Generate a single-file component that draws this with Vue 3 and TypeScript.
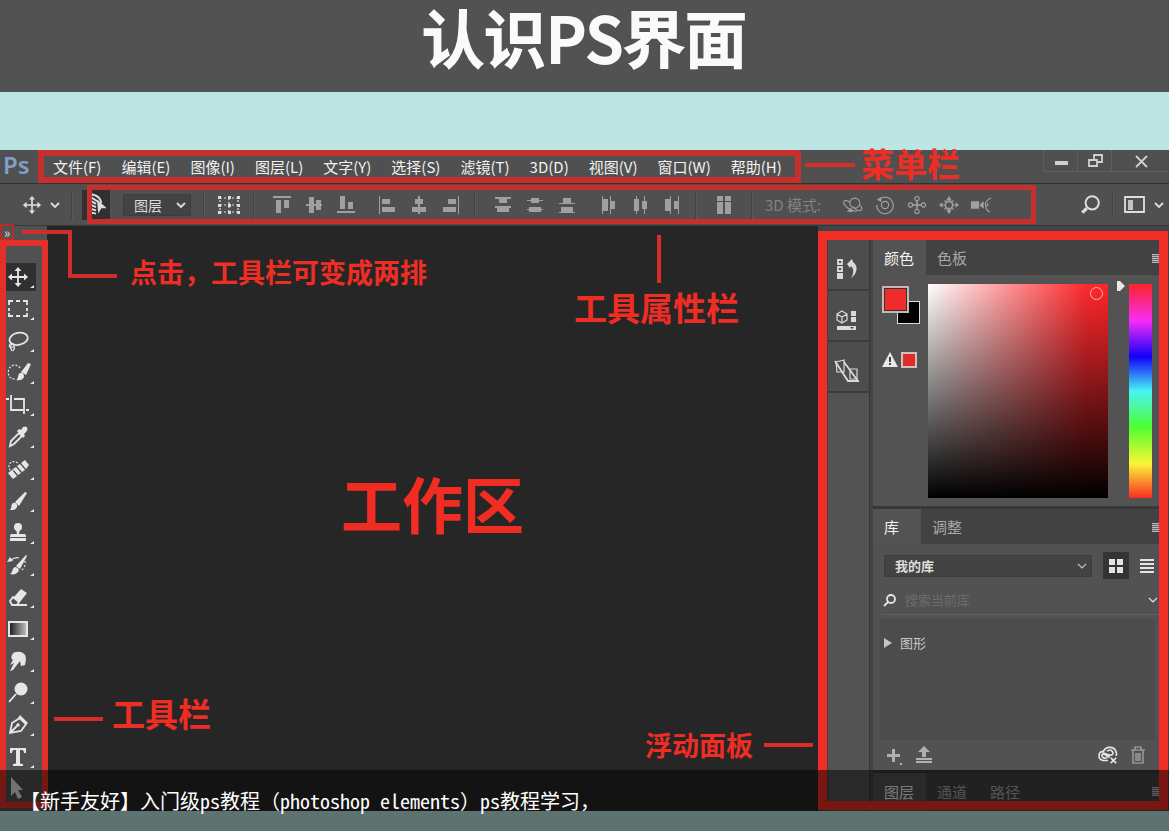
<script setup lang="ts">
import { ref } from 'vue'

interface Glyph { label: string; art: string }

const menus: string[] = ['文件(F)', '编辑(E)', '图像(I)', '图层(L)', '文字(Y)', '选择(S)', '滤镜(T)', '3D(D)', '视图(V)', '窗口(W)', '帮助(H)']

const moveArt = '<path d="M-7 0H7M0-7V7" class="s2"/><path d="M-10 0l4-3.5v7zM10 0l-4-3.5v7zM0-10l-3.5 4h7zM0 10l-3.5-4h7z"/>'

const tools: Glyph[] = [
  { label: '移动', art: moveArt },
  { label: '矩形选框', art: '<path class="s2" d="M-9-4v-4h4M-2-8h4M5-8h4v4M9-1v3M9 4v3H5M2 7h-4M-5 7h-4V4M-9 2v-3"/>' },
  { label: '套索', art: '<ellipse class="s2" cx="1" cy="-2" rx="9.3" ry="6" transform="rotate(-12)"/><path class="s1" d="M-8 3c-2 3 1 4 3 3s1-4-1-3-2 3 0 7M-5 5c3 1 1 3 0 5"/>' },
  { label: '快速选择', art: '<path class="s1" stroke-dasharray="2 1.6" d="M2-5C0-9-7-9-9-4s0 10 6 10"/><path d="M-2 7c3-1 1-5 4-7 2-1 4 1 4 3 0 4-5 5-8 4zM3-1l7-9 3 1-5 11z"/>' },
  { label: '裁剪', art: '<path class="s2" d="M-12-6h3M-7-10V5H5M-4-6H6V9M8 5h3"/>' },
  { label: '吸管', art: '<path class="s2" d="M1-4l3 3-8 8-4 2 1-5z"/><path d="M-1-6l2-2 2 1 2-3c4-2 6 2 3 5l-2 2 1 2-2 2z"/>' },
  { label: '污点修复', art: '<path class="s1" stroke-dasharray="2 1.5" d="M-4 1h-4c-3-5 1-10 6-8l2 1"/><path d="M-10 4l4-3 5 6-4 3zM-5 0l3-2 5 6-3 2zM-1-3l3-2 5 6-3 2zM3-6l4-3 4 5-3 4z"/>' },
  { label: '画笔', art: '<path d="M-9 9c4-1 1-5 4-7 3-1 5 2 4 4-2 4-5 3-8 3zM-3 1L7-9l2 1L1 5z"/>' },
  { label: '仿制图章', art: '<circle cx="0" cy="-6" r="4"/><path d="M-2-4h4L1 1h6q1 0 1 3H-8q0-3 1-3h6zM-8 5H8v3H-8z"/>' },
  { label: '历史画笔', art: '<path d="M-8 9c3-2 2-6 5-7 3 0 5 3 3 5s-4 3-8 2zM-2 1L8-10l1 1L2 4zM-11-3l3-5 3 4z"/><path class="s1" d="M-8-4c3-3 6-4 9-3"/><path class="s1" stroke-dasharray="2 2" d="M7-4c1 5-2 9-5 10"/>' },
  { label: '橡皮擦', art: '<path d="M-5 1L3-8l6 4-7 9z"/><path class="s2" d="M-8 4l3-4 6 5-2 3h-5zM-3 8H9"/>' },
  { label: '渐变', art: '<rect x="-10" y="-8" width="20" height="16"/><rect x="-8" y="-6" width="16" height="12" fill="url(#ramp)"/>' },
  { label: '涂抹', art: '<path d="M-6-6c1-4 8-4 11-2 4 2 3 8 2 12L3 5 2 0l-7 9-3 1 4-8-4 2 3-5c-2-1-2-3-1-5z"/>' },
  { label: '减淡', art: '<circle cx="3" cy="-4" r="6.5"/><path class="s2" d="M-2 1l-7 8"/>' },
  { label: '钢笔', art: '<path class="s2" d="M-8 8l2-10 8-5 6 6-5 7zM-8 8l7-7"/><circle cx="0" cy="0" r="1.8"/><path d="M2-10l8 8-2 2-8-7z"/>' },
  { label: '文字', art: '<path d="M-8-9H8v5H6c0-2-1-3-2-3H2V6q0 1 3 1v2H-5V7q3 0 3-1V-7h-2c-1 0-2 1-2 3h-2z"/>' },
  { label: '路径选择', art: '<path d="M-7-12L5 1H0l4 7-4 2-3-7-4 4z"/>' },
]

const alignA: Glyph[] = [
  { label: '顶对齐', art: '<path d="M-9-9H9v2H-9zM-6-5h5V8h-5zM2-5h5V3H2z"/>' },
  { label: '垂直居中', art: '<path d="M-8-1H8v2H-8zM-5-8h5V8h-5zM2-5h5V5H2z"/>' },
  { label: '底对齐', art: '<path d="M-9 6H9v2H-9zM-6-9h5V4h-5zM2-3h5v7H2z"/>' },
]
const alignB: Glyph[] = [
  { label: '左对齐', art: '<path d="M-8-9h1V9h-1zM-5-6h8v5h-8zM-5 2H8v5H-5z"/>' },
  { label: '水平居中', art: '<path d="M-1-9h2V9h-2zM-4-6h8v5h-8zM-7 2H7v5H-7z"/>' },
  { label: '右对齐', art: '<path d="M7-9h1V9H7zM-3-6h8v5h-8zM-8 2H5v5H-8z"/>' },
]
const distA: Glyph[] = [
  { label: '按顶分布', art: '<path d="M-8-8H8v2H-8zM-4-6h8v4h-8zM-8 1H8v2H-8zM-6 3H6v4H-6z"/>' },
  { label: '按垂直中心分布', art: '<path d="M-8-5H8v1H-8zM-4-7h8v5h-8zM-8 4H8v1H-8zM-6 2H6v5H-6z"/>' },
  { label: '按底分布', art: '<path d="M-8-2H8v1H-8zM-4-7h8v5h-8zM-8 7H8v1H-8zM-6 2H6v5H-6z"/>' },
]
const distB: Glyph[] = [
  { label: '按左分布', art: '<path d="M-6-9h1V9h-1zM-5-6h5V6h-5zM2-9h1V9H2zM3-4h4V4H3z"/>' },
  { label: '按水平中心分布', art: '<path d="M-4-9h1V9h-1zM-6-6h5V6h-5zM4-9h1V9H4zM2-4h5V4H2z"/>' },
  { label: '按右分布', art: '<path d="M-2-9h1V9h-1zM-7-6h5V6h-5zM6-9h1V9H6zM2-4h4V4H2z"/>' },
]
const spread: Glyph = { label: '自动对齐', art: '<path d="M-7-9h6v5h-6zM1-9h6v5H1zM-7-3h6V9h-6zM1-3h6V9H1z"/>' }
const modes: Glyph[] = [
  { label: '旋转', art: '<circle class="s1" cx="2" cy="-2" r="5.5"/><path class="s1" d="M-3-3c-4-3-8-2-7 1 1 4 9 9 14 9M7 0c3 2 4 5 1 6s-6-2-8-4"/><path d="M-7 7l7 1-2-5z"/>' },
  { label: '滚动', art: '<circle class="s1" cx="0" cy="0" r="4"/><path class="s1" d="M-5-7A9 9 0 1 1-9 0"/><path d="M-9-6l5-3v6z"/>' },
  { label: '拖动', art: '<path class="s2" d="M-5 0H5M0-5V5"/><circle class="s1" r="2.3" cx="-7"/><circle class="s1" r="2.3" cx="7"/><circle class="s1" r="2.3" cy="-7"/><circle class="s1" r="2.3" cy="7"/>' },
  { label: '滑动', art: '<circle class="s2" r="4"/><path class="s1" d="M-7 0h3M4 0h3M-5-5l2 2M5-5L3-3M-5 5l2-2M5 5L3 3"/><path d="M-11 0l4-3v6zM11 0L7-3v6zM0 10l-3-5h6zM0-10l-3 5h6z"/>' },
  { label: '缩放', art: '<path d="M-11-4h9v8h-9zM-1-1l4-3v8l-4-3z"/><path class="s1" d="M11-8C5-5 4-1 5 0s4 1 2-2M5 0c0 4 1 6 5 8"/>' },
]
const dock: Glyph[] = [
  { label: '历史记录', art: '<path class="s2" d="M-9-9h4v4h-4zM-9-2h4v4h-4z"/><path d="M-10 4h6v6h-6zM0-5l5-5 1 3c6 4 4 12-2 16 3-5 3-9 0-12l-1 2z"/>' },
  { label: '属性', art: '<path class="s1" d="M-10-6l5-3 5 3v6l-5 3-5-3zM-10-6l5 3 5-3M-5-3v6"/><path d="M4-9h5v5H4zM4-3h5v5H4zM-10 6H9v4h-19z"/><path d="M3 7h4l-2 2z" fill="#444"/>' },
  { label: '画笔设置', art: '<path class="s1" d="M-11-9l8-2v12h-7zM3-2h7v10H3z"/><path class="s2" d="M-12-10L1 10h10L-3-9"/>' },
]

const auto = ref('图层')
const lib = ref('我的库')
const query = ref('')
</script>

<template>
  <main class="page">
    <h1 class="title">认识PS界面</h1>

    <svg class="defs" aria-hidden="true"><defs><linearGradient id="ramp"><stop offset="0" stop-color="#222" /><stop offset="1" stop-color="#bbb" /></linearGradient></defs></svg>

    <section class="window">
      <header class="menubar">
        <span class="logo">Ps</span>
        <nav class="menus"><button v-for="m in menus" :key="m" type="button">{{ m }}</button></nav>
        <div class="wincontrols">
          <button type="button" aria-label="最小化"><svg viewBox="-10 -10 20 20"><path d="M-6 0H7v4H-6z" /></svg></button>
          <button type="button" aria-label="还原"><svg viewBox="-10 -10 20 20"><path class="s2" d="M-6-1H2v6H-6zM-1-1v-5h8v7H2" /></svg></button>
          <button type="button" aria-label="关闭"><svg viewBox="-10 -10 20 20"><path class="s2" d="M-5-5L6 6M6-5L-5 6" /></svg></button>
        </div>
      </header>

      <div class="options">
        <button type="button" aria-label="移动工具" class="lit"><svg viewBox="-11 -11 22 22" v-html="moveArt"></svg></button>
        <button type="button" aria-label="预设" class="lit slim"><svg viewBox="-6 -10 12 20"><path class="s2" d="M-4-2l4 4 4-4" /></svg></button>
        <i class="rule first"></i>
        <button type="button" aria-label="自动选择" class="autosel"><svg viewBox="-13 -13 26 26"><path class="s2" d="M-6-8L2-3M-7-5L0-1M-7-1L0 2M-7 3L0 5M-5-10C3-9 4-5 5-2M-5 7L0 8" /><path d="M1-5l9 8-5 0-3 5z" /></svg></button>
        <div class="pick layerpick">
          <select v-model="auto" aria-label="自动选择对象"><option>图层</option><option>组</option></select>
          <svg viewBox="-6 -10 12 20"><path class="s2" d="M-4-2l4 4 4-4" /></svg>
        </div>
        <i class="rule"></i>
        <button type="button" aria-label="显示变换控件" class="lit transform"><svg viewBox="-12 -10 24 20"><path class="s1" stroke-dasharray="2 2" d="M-9-7H9V7H-9zM0-7V7M-9 0H9" /><path d="M-11-9h3v3h-3zM-1-9h3v3h-3zM8-9h3v3H8zM-11-1h3v3h-3zM8-1h3v3H8zM-11 6h3v3h-3zM-1 6h3v3h-3zM8 6h3v3H8zM-1-1h3v3h-3z" /></svg></button>
        <i class="rule"></i>
        <div class="set"><button v-for="g in alignA" :key="g.label" type="button" :aria-label="g.label"><svg viewBox="-10 -10 20 20" v-html="g.art"></svg></button></div>
        <div class="set"><button v-for="g in alignB" :key="g.label" type="button" :aria-label="g.label"><svg viewBox="-10 -10 20 20" v-html="g.art"></svg></button></div>
        <i class="rule"></i>
        <div class="set"><button v-for="g in distA" :key="g.label" type="button" :aria-label="g.label"><svg viewBox="-10 -10 20 20" v-html="g.art"></svg></button></div>
        <div class="set"><button v-for="g in distB" :key="g.label" type="button" :aria-label="g.label"><svg viewBox="-10 -10 20 20" v-html="g.art"></svg></button></div>
        <i class="rule"></i>
        <button type="button" class="spread" :aria-label="spread.label"><svg viewBox="-10 -10 20 20" v-html="spread.art"></svg></button>
        <i class="rule"></i>
        <span class="modelabel">3D 模式:</span>
        <div class="set modes"><button v-for="g in modes" :key="g.label" type="button" :aria-label="g.label"><svg viewBox="-12 -12 24 24" v-html="g.art"></svg></button></div>
        <div class="tail">
          <button type="button" aria-label="搜索" class="lit"><svg viewBox="-10 -10 20 20"><circle class="s2" cx="2" cy="-2" r="6" /><path class="s3" d="M-3 3l-4 4" /></svg></button>
          <i class="rule"></i>
          <button type="button" aria-label="工作区" class="lit"><svg viewBox="-11 -11 22 22"><path class="s2" d="M-10-8H9V7H-10z" /><path d="M-7-5h5V5h-5z" opacity=".8" /></svg></button>
          <button type="button" aria-label="切换工作区" class="lit slim"><svg viewBox="-6 -10 12 20"><path class="s2" d="M-4-2l4 4 4-4" /></svg></button>
        </div>
      </div>

      <div class="workspace">
        <div class="toolbar">
          <button v-for="(t, i) in tools" :key="t.label" type="button" :aria-label="t.label" :class="{ active: i === 0 }">
            <svg viewBox="-14 -14 32 28"><g v-html="t.art"></g><path v-if="i < 16" d="M16 8v3h-4z" /></svg>
          </button>
        </div>

        <div class="canvas"><strong>工作区</strong></div>

        <aside class="side">
          <div class="dock"><button v-for="d in dock" :key="d.label" type="button" :aria-label="d.label"><svg viewBox="-13 -13 26 26" v-html="d.art"></svg></button></div>
          <div class="panels">
            <section class="colorpanel">
              <div class="tabs"><button type="button" class="on">颜色</button><button type="button">色板</button><span class="burger"></span></div>
              <div class="colorbody">
                <div class="chips">
                  <div class="pair"><i class="back"></i><i class="front"></i></div>
                  <div class="warn"><svg viewBox="0 0 16 16"><path d="M8 0l8 15H0z" /><path d="M7 5h2v5H7zM7 11h2v2H7z" class="hole" /></svg><i></i></div>
                </div>
                <div class="field"><i class="ring"></i></div>
                <svg class="pointer" viewBox="0 0 8 10"><path d="M0 0h3l5 5-5 5H0z" /></svg>
                <div class="hue"></div>
              </div>
            </section>
            <section class="library">
              <div class="tabs"><button type="button" class="on">库</button><button type="button">调整</button><span class="burger"></span></div>
              <div class="librow">
                <div class="pick libpick">
                  <select v-model="lib" aria-label="库"><option>我的库</option></select>
                  <svg viewBox="-6 -10 12 20"><path class="s1" d="M-4-2l4 4 4-4" /></svg>
                </div>
                <button type="button" class="gridbtn" aria-label="网格视图"><svg viewBox="0 0 14 14"><path d="M0 0h6v6H0zM8 0h6v6H8zM0 8h6v6H0zM8 8h6v6H8z" /></svg></button>
                <button type="button" class="listbtn" aria-label="列表视图"><svg viewBox="0 0 14 14"><path d="M0 0h14v2H0zM0 4h14v2H0zM0 8h14v2H0zM0 12h14v2H0z" /></svg></button>
              </div>
              <label class="search">
                <svg viewBox="-8 -8 16 16"><circle class="s2" cx="1" cy="-1" r="4" /><path class="s2" d="M-2 2l-4 4" /></svg>
                <input v-model="query" type="text" placeholder="搜索当前库" aria-label="搜索当前库">
                <svg class="small" viewBox="-6 -10 12 20"><path class="s1" d="M-4-2l4 4 4-4" /></svg>
              </label>
              <div class="liblist"><button type="button"><svg viewBox="0 0 8 10"><path d="M0 0l8 5-8 5z" /></svg>图形</button></div>
              <div class="libfoot">
                <button type="button" aria-label="添加"><svg viewBox="-10 -10 20 20"><path d="M-7-1h5v-5h3v5h5v3H1v5h-3V2h-5zM6 8h2v2H6z" /></svg></button>
                <button type="button" aria-label="上传"><svg viewBox="-10 -10 20 20"><path d="M0-9l6 6H2v5h-4v-5h-4zM-8 3H8v2H-8zM-8 6H8v2H-8z" /></svg></button>
                <button type="button" aria-label="云同步" class="cloud"><svg viewBox="-11 -11 22 22"><path class="s2" d="M0 6h-5C-12 5-11-4-5-4-2-11 8-9 9-3c1 2 0 3 0 4M-1 3c-6 2-7-4-4-4 3 0 4 4 7 3M-1-4C3-8 8-2 4 0-1 1-3-3-6-2M3 3l6 6M9 3L3 9" /></svg></button>
                <button type="button" aria-label="删除"><svg viewBox="-10 -10 20 20"><path class="s1" d="M-7-5H7M-3-5v-3h6v3M-5-5V8H5V-5M-2-2v8M0-2v8M2-2v8" /></svg></button>
              </div>
            </section>
            <div class="tabs layers"><button type="button" class="on">图层</button><button type="button">通道</button><button type="button">路径</button><span class="burger"></span></div>
          </div>
        </aside>
      </div>

      <div class="marks">
        <i class="frame f-menu"></i>
        <i class="frame f-options"></i>
        <i class="frame f-tools"></i>
        <i class="frame f-side"></i>
        <span class="expand">»</span>
        <i class="line l-menu"></i>
        <i class="line l-prop"></i>
        <i class="line l-tools"></i>
        <i class="line l-side"></i>
        <svg class="elbow" viewBox="0 0 100 52"><path d="M1 3H49V47H96" /></svg>
        <span class="note big n-menu">菜单栏</span>
        <span class="note n-click">点击，工具栏可变成两排</span>
        <span class="note big n-prop">工具属性栏</span>
        <span class="note big n-tools">工具栏</span>
        <span class="note n-side">浮动面板</span>
      </div>
    </section>

    <footer class="caption">【新手友好】入门级ps教程（photoshop elements）ps教程学习，</footer>
  </main>
</template>

<style>
body { margin: 0; }
</style>

<style scoped>
.page {
  position: relative;
  display: flex;
  flex-direction: column;
  min-height: 100vh;
  padding-bottom: 20px;
  box-sizing: border-box;
  background: #bde5e4;
  font-family: "Noto Sans CJK SC", "Noto Sans", sans-serif;
  color: #e4e4e4;
}
.page * { box-sizing: border-box; }
.page :deep(.s1), .page :deep(.s2), .page :deep(.s3) { fill: none; stroke: currentColor; stroke-width: 1.2; }
.page :deep(.s2) { stroke-width: 1.8; }
.page :deep(.s3) { stroke-width: 3; }
.defs { position: absolute; width: 0; height: 0; }
svg { display: block; fill: currentColor; }
i { display: block; flex: none; }
button { border: 0; padding: 0; margin: 0; background: none; color: inherit; font: inherit; flex: none; }
.title {
  margin: 0 0 58px;
  height: 92px;
  line-height: 73px;
  font-size: 62px;
  font-weight: 500;
  -webkit-text-stroke: 2px #fafafa;
  text-align: center;
  color: #fafafa;
  background: #525252;
}
.window { position: relative; flex: 1; display: flex; flex-direction: column; background: #262626; }

.menubar { display: flex; height: 34px; background: #505050; border-bottom: 1px solid #333; }
.logo { width: 53px; padding-left: 3px; font: 600 24px/30px "Noto Sans", sans-serif; color: #7f9fca; }
.menus { display: flex; gap: 20px; font-size: 15px; line-height: 30px; color: #f2f2f2; white-space: nowrap; }
.wincontrols { margin-left: auto; display: flex; height: 22px; color: #d0d0d0; border-bottom: 1px solid #606060; }
.wincontrols button { display: flex; justify-content: center; align-items: center; width: 34px; border-left: 1px solid #606060; }
.wincontrols button:last-child { width: 58px; }
.wincontrols svg { width: 20px; height: 20px; }

.options { display: flex; align-items: center; height: 42px; padding-left: 22px; background: #505050; border-bottom: 1px solid #383838; color: #a0a0a0; }
.options svg { width: 20px; height: 20px; }
.options .slim { margin-left: 7px; }
.options .slim svg, .pick svg { width: 12px; height: 20px; }
.options .lit { color: #dedede; }
.rule { width: 2px; height: 28px; margin: 0 12px; background: #434343; border-right: 1px solid #5a5a5a; }
.rule.first { margin: 0 9px 0 10px; }
.options .autosel { width: 28px; height: 30px; background: #303030; color: #ddd; }
.options .autosel svg { width: 28px; height: 28px; }
.pick { display: grid; align-items: center; background: #434343; }
.pick select, .pick svg { grid-area: 1 / 1; }
.pick svg { justify-self: end; margin-right: 4px; pointer-events: none; }
.pick select { appearance: none; width: 100%; height: 22px; border: 1px solid #3d3d3d; padding: 0 10px; background: transparent; color: #ddd; font: 14px/20px "Noto Sans CJK SC", sans-serif; }
.layerpick { width: 68px; margin-left: 13px; color: #ddd; }
.transform svg { width: 24px; }
.set { display: flex; gap: 12px; margin: 0 1px 0 5px; }
.set + .set { margin-left: 20px; }
.spread { margin: 0 5px; }
.modelabel { font-size: 15px; color: #828282; white-space: nowrap; margin-right: 16px; }
.modes button, .modes svg { width: 22px; height: 22px; }
.modes { gap: 10px; }
.tail { display: flex; align-items: center; margin-left: auto; padding-right: 4px; }
.tail .rule { margin: 0 10px 0 11px; }
.tail svg { width: 22px; height: 22px; }

.workspace { flex: 1; display: flex; }
.toolbar { width: 47px; padding: 37px 0 0 4px; display: flex; flex-direction: column; gap: 4px; background: #515151; height: 585px; overflow: hidden; }
.toolbar button { width: 32px; height: 28px; color: #e6e6e6; }
.toolbar svg { width: 32px; height: 28px; }
.toolbar .active { background: #303030; }
.canvas { flex: 1; display: flex; align-items: center; justify-content: center; padding-bottom: 32px; }
.canvas strong { font-size: 61px; line-height: 80px; color: #f12c22; }

.side { width: 351px; padding: 14px 10px 0; display: flex; background: #434343; }
.dock { width: 42px; background: #535353; border-right: 1px solid #363636; margin-right: 3px; }
.dock button { display: flex; align-items: center; justify-content: center; width: 41px; height: 51px; padding: 8px 3px 0 0; border-bottom: 2px solid #3c3c3c; background: #4d4d4d; color: #dadada; }
.dock svg { width: 26px; height: 26px; }
.panels { flex: 1; min-width: 0; display: flex; flex-direction: column; background: #383838; gap: 3px; }
.tabs { display: flex; height: 35px; background: #424242; font-size: 15px; line-height: 34px; color: #a8a8a8; align-items: stretch; }
.tabs button { min-width: 48px; padding: 0 12px 0 11px; text-align: left; }
.tabs .on { background: #535353; color: #f2f2f2; }
.burger { margin: 14px -2px 0 auto; width: 9px; height: 9px; background: repeating-linear-gradient(#b8b8b8 0 1px, #6a6a6a 1px 2px); }
.colorpanel { background: #535353; height: 266px; }
.colorbody { display: flex; padding: 9px 7px 0 9px; }
.chips { width: 46px; }
.pair { display: grid; width: 38px; height: 38px; margin-top: 2px; }
.pair i { grid-area: 1 / 1; width: 23px; height: 23px; border: 1px solid #ddd; background: #000; }
.pair .back { place-self: end; }
.pair .front { width: 27px; height: 27px; border: 2px solid #c9b5b2; outline: 1px solid #333; outline-offset: -3px; background: #ef2c2a; }
.warn { display: flex; align-items: center; gap: 3px; margin-top: 28px; color: #e8e8e8; }
.warn svg { width: 16px; height: 16px; }
.warn i { width: 16px; height: 16px; border: 2px solid #cfc0be; background: #e32b29; }
.hole { fill: #444; }
.field { flex: 1; height: 214px; padding: 3px 5px; background: linear-gradient(transparent, #000), linear-gradient(90deg, #fff, #ff2a2e 88%, #ff262a); }
.ring { width: 13px; height: 13px; margin-left: auto; border: 1px solid #f0b8b8; border-radius: 50%; }
.pointer { width: 8px; height: 10px; margin: -3px 4px 0 9px; color: #e8e8e8; }
.hue { width: 23px; height: 214px; background: linear-gradient(#fc2528, #f82cf5 17%, #1200f8 34%, #48f3f3 50%, #4fff30 67%, #f8f637 84%, #fa2c20); }

.library { background: #525252; flex: 1; display: flex; flex-direction: column; }
.librow { display: flex; align-items: center; padding: 8px 5px 0 11px; }
.libpick { flex: 1; color: #c0c0c0; }
.libpick select { font-size: 13px; font-weight: 700; }
.gridbtn { display: flex; align-items: center; justify-content: center; width: 26px; height: 27px; margin: 0 11px; background: #343434; }
.gridbtn svg, .listbtn svg { width: 14px; height: 14px; }
.search { display: flex; align-items: center; height: 36px; padding-top: 6px; margin: 0 0 4px 9px; border-bottom: 1px solid #606060; }
.search svg { width: 16px; height: 16px; }
.search .small { width: 12px; height: 20px; }
.search input { flex: 1; min-width: 0; margin-left: 7px; padding: 0; border: 0; outline: 0; background: transparent; color: #ddd; font: 13px/20px "Noto Sans CJK SC", sans-serif; }
.search input::placeholder { color: #6c6c6c; opacity: 1; }
.liblist { flex: 1; margin: 0 4px 0 7px; padding: 14px 4px; background: #4c4c4c; }
.liblist button { display: flex; align-items: center; gap: 8px; font-size: 13px; line-height: 20px; color: #c6c6c6; }
.liblist svg { width: 8px; height: 10px; }
.libfoot { display: flex; gap: 10px; height: 30px; align-items: center; padding: 0 11px 0 11px; color: #b0b0b0; }
.libfoot svg { width: 20px; height: 20px; }
.libfoot .cloud { margin-left: auto; color: #e6e6e6; }
.layers { height: 38px; }

.marks { position: absolute; inset: 0; pointer-events: none; color: #ee2d24; }
.marks > * { position: absolute; }
.frame { border: 5px solid #c6302c; }
.f-menu { left: 38px; top: 0; width: 763px; height: 33px; border-width: 6px; }
.f-options { left: 87px; top: 35px; width: 949px; height: 39px; }
.f-tools { left: 0; top: 90px; bottom: 3px; width: 48px; border-color: #e2302a; border-width: 6px; }
.f-side { right: 1px; top: 81px; bottom: 1px; width: 350px; border: 9px solid #f12e25; }
.expand { left: 0; top: 74px; width: 14px; height: 16px; border: 2px solid #b52c28; font-size: 14px; line-height: 12px; text-align: center; color: #ddd; }
.line { background: #d92d27; }
.l-menu { left: 805px; top: 13px; width: 50px; height: 4px; }
.l-prop { left: 657px; top: 85px; width: 4px; height: 48px; }
.l-tools { left: 54px; bottom: 90px; width: 49px; height: 4px; }
.l-side { right: 356px; bottom: 64px; width: 49px; height: 4px; }
.elbow { left: 21px; top: 79px; width: 100px; height: 52px; fill: none; stroke: #d22e29; stroke-width: 4; }
.note { font-size: 27px; line-height: 40px; font-weight: 700; white-space: nowrap; }
.big { font-size: 33px; }
.n-menu { left: 861px; top: -7px; }
.n-click { left: 130px; top: 102px; }
.n-prop { left: 574px; top: 137px; }
.n-tools { left: 112px; bottom: 78px; }
.n-side { right: 416px; bottom: 46px; }

.caption {
  position: absolute;
  left: 0;
  right: 0;
  bottom: 0;
  height: 61px;
  padding: 16px 20px 0;
  background: rgba(0, 0, 0, .5);
  color: #fff;
  font: 20px/30px "Noto Sans Mono CJK SC", "Noto Sans CJK SC", monospace;
  white-space: nowrap;
}
</style>
